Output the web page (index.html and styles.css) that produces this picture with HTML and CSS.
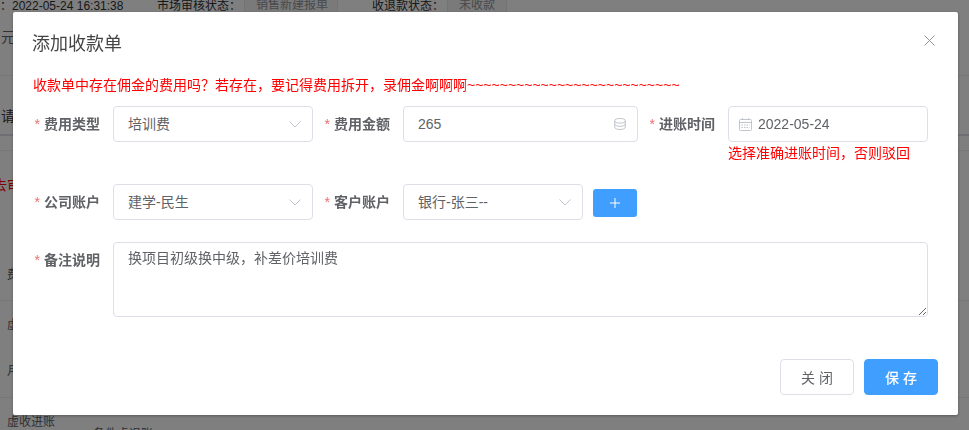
FILE: index.html
```html
<!DOCTYPE html>
<html lang="zh-CN">
<head>
<meta charset="utf-8">
<title>添加收款单</title>
<link rel="stylesheet" href="styles.css">
</head>
<body>
<div class="page">
  <div class="bg-row bg-top">
    <span class="bg-date">&#xFF1A;2022-05-24 16:31:38</span>
    <span class="bg-key bg-key-a">市场审核状态&#xFF1A;</span>
    <span class="bg-tag bg-tag-a">销售新建报单</span>
    <span class="bg-key bg-key-b">收退款状态&#xFF1A;</span>
    <span class="bg-tag">未收款</span>
  </div>
  <div class="bg-cell bg-h1">元</div>
  <div class="bg-cell bg-h2">请</div>
  <div class="bg-cell bg-gap"></div>
  <div class="bg-cell bg-h3">去审</div>
  <div class="bg-cell bg-h4">费</div>
  <div class="bg-cell bg-h5">虚</div>
  <div class="bg-cell bg-h6">月</div>
  <div class="bg-cell bg-h7"><span class="bg-link">虚收进账</span><span class="bg-sub">备件虚退账</span></div>
</div>

<div class="overlay"></div>

<div class="dialog">
  <header class="dialog-head">
    <h2 class="dialog-title">添加收款单</h2>
    <svg class="close-icon" width="11" height="11" viewBox="0 0 11 11"><path d="M0.500 0.500l10 10M10.500 0.500l-10 10" fill="none" stroke="#909399" stroke-width="1"/></svg>
  </header>
  <div class="dialog-body">
    <p class="notice">收款单中存在佣金的费用吗&#xFF1F;若存在&#xFF0C;要记得费用拆开&#xFF0C;录佣金啊啊啊~~~~~~~~~~~~~~~~~~~~~~~~~~</p>

    <div class="form-row row-one">
      <label class="label">费用类型</label>
      <div class="field w200">
        <span class="value">培训费</span>
        <svg class="chev" width="12" height="7" viewBox="0 0 12 7"><path d="M0.500 0.500l5.500 5.500 5.500-5.500" fill="none" stroke="#c0c4cc" stroke-width="1"/></svg>
      </div>
      <label class="label">费用金额</label>
      <div class="field w235">
        <span class="value latin">265</span>
        <svg class="db" width="12" height="12" viewBox="0 0 12 12" fill="none" stroke="#c0c4cc" stroke-width="1"><ellipse cx="6" cy="2.800" rx="5.300" ry="2.300"/><path d="M0.700 2.800v6.400c0 1.300 2.400 2.300 5.300 2.300s5.300-1 5.300-2.300V2.800M0.700 6c0 1.300 2.400 2.300 5.300 2.300s5.300-1 5.300-2.300"/></svg>
      </div>
      <label class="label">进账时间</label>
      <div class="date-col">
        <div class="field field-date w200">
          <svg class="cal" width="13" height="13" viewBox="0 0 13 13" fill="none" stroke="#c0c4cc" stroke-width="1"><rect x="0.500" y="1.500" width="12" height="11" rx="1"/><path d="M0.500 4.500h12M3.500 0v2M9.500 0v2"/><path d="M2.500 7h8M2.500 9.500h8" stroke-dasharray="1.500 1"/></svg>
          <span class="value latin">2022-05-24</span>
        </div>
        <div class="field-tip">选择准确进账时间&#xFF0C;否则驳回</div>
      </div>
    </div>

    <div class="form-row row-two">
      <label class="label">公司账户</label>
      <div class="field w200">
        <span class="value">建学-民生</span>
        <svg class="chev" width="12" height="7" viewBox="0 0 12 7"><path d="M0.500 0.500l5.500 5.500 5.500-5.500" fill="none" stroke="#c0c4cc" stroke-width="1"/></svg>
      </div>
      <label class="label">客户账户</label>
      <div class="field w180">
        <span class="value">银行-张三--</span>
        <svg class="chev" width="12" height="7" viewBox="0 0 12 7"><path d="M0.500 0.500l5.500 5.500 5.500-5.500" fill="none" stroke="#c0c4cc" stroke-width="1"/></svg>
      </div>
      <button class="add-btn" type="button" aria-label="添加">
        <svg width="10" height="10" viewBox="0 0 10 10"><path d="M5 0v10M0 5h10" stroke="#fff" stroke-width="1"/></svg>
      </button>
    </div>

    <div class="form-row">
      <label class="label label-top">备注说明</label>
      <textarea class="memo">换项目初级换中级&#xFF0C;补差价培训费</textarea>
    </div>
  </div>
  <footer class="dialog-foot">
    <button class="btn" type="button">关 闭</button>
    <button class="btn btn-primary" type="button">保 存</button>
  </footer>
</div>
</body>
</html>
```
FILE: styles.css
```css
* { box-sizing: border-box; }
html, body { margin: 0; height: 100%; overflow: hidden; }
body {
  background: #fff;
  font-family: "Liberation Sans", "Noto Sans CJK SC", sans-serif;
  color: #606266;
  font-size: 14px;
}
.page { height: 430px; overflow: hidden; position: relative; }

/* dimmed page behind the dialog */
.bg-row { display: flex; align-items: center; font-size: 12px; }
.bg-top { height: 22px; margin-top: -7px; color: #303133; }
.bg-date { width: 157px; white-space: nowrap; }
.bg-key-a { width: 87px; white-space: nowrap; }
.bg-key-b { width: 75px; margin-left: 34px; white-space: nowrap; }
.bg-tag {
  height: 22px; line-height: 22px; padding: 0 11px;
  background: #f4f4f5; color: #909399; border: 1px solid #e9e9eb; border-radius: 2px;
}
.bg-tag-a { width: 94px; white-space: nowrap; }
.bg-cell { font-size: 12px; line-height: 20px; color: #606266; padding-left: 7px; white-space: nowrap; }
.bg-h1 { height: 61px; padding-left: 1px; padding-top: 12px; font-size: 14px; border-bottom: 1px solid #ebeef5; }
.bg-h2 { height: 60px; padding-left: 1px; padding-top: 30px; font-size: 14px; color: #303133; border-bottom: 2px solid #dcdfe6; }
.bg-gap { height: 15px; border-bottom: 1px solid #ebeef5; }
.bg-h3 { height: 80px; padding-top: 24px; padding-left: 0; margin-left: -7px; font-size: 14px; color: #f00; }
.bg-h4 { height: 70px; padding-top: 34px; border-bottom: 1px solid #ebeef5; }
.bg-h5 { height: 47px; padding-top: 14px; }
.bg-h6 { height: 50px; padding-top: 13px; border-bottom: 1px solid #ebeef5; }
.bg-h7 { height: 40px; padding-top: 14px; }
.bg-sub { font-size: 12px; margin-left: 38px; position: relative; top: 12px; }

.overlay { position: fixed; inset: 0; background: rgba(0, 0, 0, .5); }

.dialog {
  position: fixed; left: 13px; top: 12px; width: 945px; height: 403px;
  background: #fff; border-radius: 2px;
  box-shadow: 0 1px 3px rgba(0, 0, 0, .3);
  display: flex; flex-direction: column;
}
.dialog-head {
  height: 62px; padding: 0 23px 0 19px;
  display: flex; align-items: center; justify-content: space-between;
  flex: none;
}
.dialog-title { margin: 0; font-size: 18px; font-weight: 400; line-height: 24px; color: #454545; position: relative; top: 1px; }
.close-icon { position: relative; top: -3px; }

.dialog-body { padding: 0 30px 0 10px; flex: none; }
.notice {
  margin: 0 0 9px 10px; height: 23px; line-height: 23px;
  font-size: 14px; color: #f00; white-space: nowrap;
}
.form-row { display: flex; align-items: flex-start; margin-bottom: 22px; }
.row-one { margin-bottom: 20px; }
.label {
  flex: none; width: 90px; height: 36px; line-height: 36px;
  padding-right: 13px; text-align: right;
  font-weight: 700; font-size: 14px; color: #606266; white-space: nowrap;
}
.label::before { content: "*"; color: #f56c6c; margin-right: 4px; font-weight: 400; }
.field {
  flex: none; position: relative; height: 36px;
  border: 1px solid #dcdfe6; border-radius: 4px; background: #fff;
  display: flex; align-items: center; justify-content: space-between;
  padding: 0 11px 0 14px;
}
.w200 { width: 200px; }
.w235 { width: 235px; }
.w180 { width: 180px; }
.value { color: #606266; font-size: 14px; line-height: 34px; }
.field-date { justify-content: flex-start; padding: 0 0 0 10px; gap: 6px; }
.field-tip { color: #f00; font-size: 14px; line-height: 22px; white-space: nowrap; }
.date-col { display: flex; flex-direction: column; height: 58px; }

.add-btn {
  flex: none; width: 44px; height: 28px; margin: 5px 0 0 10px; padding: 0;
  background: #409eff; border: 0; border-radius: 3px;
  display: flex; align-items: center; justify-content: center;
}
.memo {
  flex: none; display: block; width: 815px; height: 75px; padding: 5px 14px; margin: 0;
  border: 1px solid #dcdfe6; border-radius: 4px; outline: 0;
  font: 14px/1.5 "Liberation Sans", "Noto Sans CJK SC", sans-serif; color: #606266;
  resize: vertical;
}
.dialog-foot {
  margin-top: auto; padding: 0 20px 20px 0;
  display: flex; justify-content: flex-end; gap: 10px;
}
.btn {
  width: 74px; height: 36px; padding: 0;
  background: #fff; border: 1px solid #dcdfe6; border-radius: 4px;
  font: 14px "Liberation Sans", "Noto Sans CJK SC", sans-serif; color: #606266;
}
.btn-primary { background: #409eff; border-color: #409eff; color: #fff; font-weight: 500; }
```
